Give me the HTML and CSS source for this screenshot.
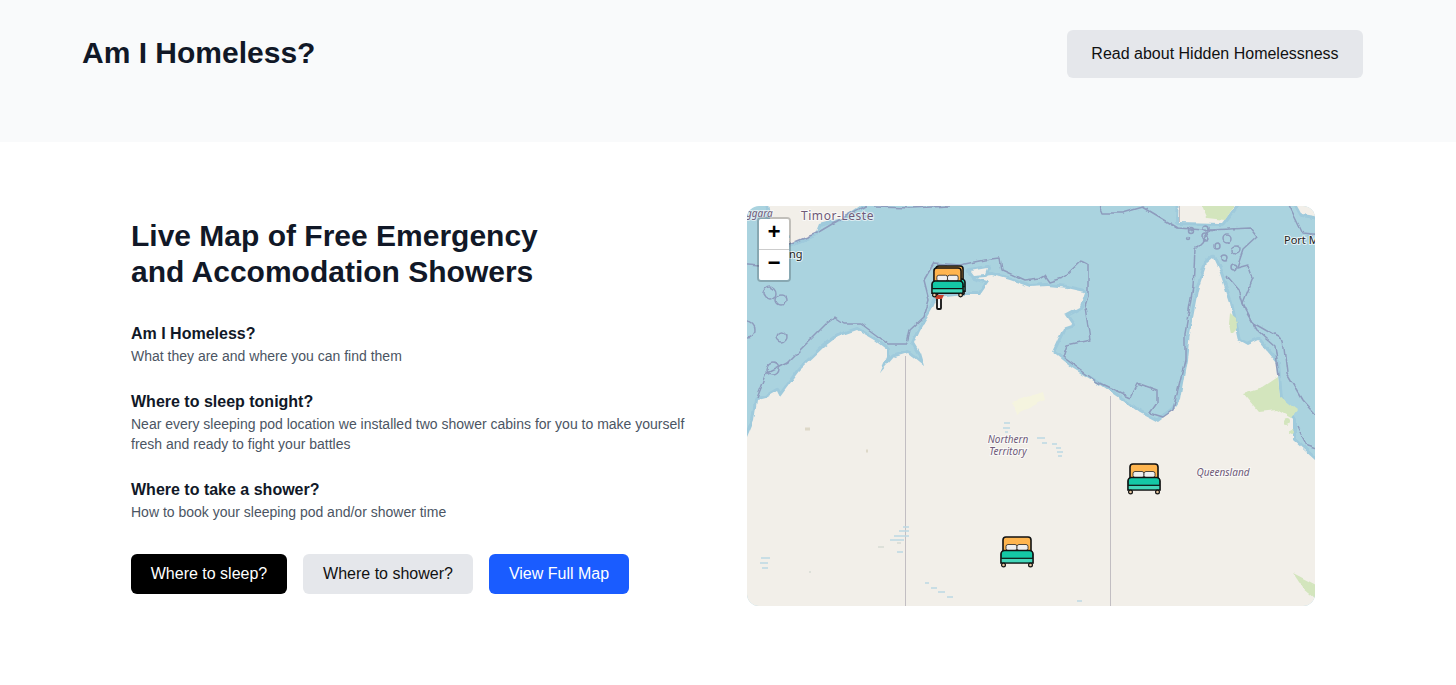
FILE: index.html
```html
<!DOCTYPE html>
<html lang="en">
  <head>
    <meta charset="utf-8" />
    <title>Am I Homeless?</title>
    <link rel="stylesheet" href="styles.css">
  </head>
  <body>
    <header class="topo">
      <h1>Am I Homeless?</h1>
      <a class="btn btn-cinza btn-topo" href="#">Read about Hidden Homelessness</a>
    </header>

    <main class="conteudo">
      <section class="esquerda">
        <h2>Live Map of Free Emergency<br>and Accomodation Showers</h2>
        <div class="item">
          <h3>Am I Homeless?</h3>
          <p>What they are and where you can find them</p>
        </div>
        <div class="item">
          <h3>Where to sleep tonight?</h3>
          <p>Near every sleeping pod location we installed two shower cabins for you to make yourself fresh and ready to fight your battles</p>
        </div>
        <div class="item">
          <h3>Where to take a shower?</h3>
          <p>How to book your sleeping pod and/or shower time</p>
        </div>
        <div class="botoes">
          <a class="btn btn-preto" href="#">Where to sleep?</a>
          <a class="btn btn-cinza btn-banho" href="#">Where to shower?</a>
          <a class="btn btn-azul" href="#">View Full Map</a>
        </div>
      </section>

      <div class="mapa">
        <svg class="mapa-svg" viewBox="0 0 568 400" width="568" height="400">
          <defs>
            <filter id="costa" filterUnits="userSpaceOnUse" x="-30" y="-30" width="630" height="460">
              <feTurbulence type="fractalNoise" baseFrequency="0.09" numOctaves="2" seed="4"/>
              <feDisplacementMap in="SourceGraphic" scale="5" xChannelSelector="R" yChannelSelector="G"/>
              <feGaussianBlur stdDeviation="0.45"/>
            </filter>
            <filter id="suave" filterUnits="userSpaceOnUse" x="0" y="0" width="568" height="400">
              <feGaussianBlur stdDeviation="0.5"/>
            </filter>
            <symbol id="cama" viewBox="0 0 34 32">
              <path d="M3 15V4a3 3 0 0 1 3-3h22a3 3 0 0 1 3 3v11z" fill="#ffb54f" stroke="#111" stroke-width="1.6"/>
              <rect x="6" y="8.5" width="11" height="6" rx="2" fill="#efefef" stroke="#222" stroke-width=".8"/>
              <rect x="17" y="8.5" width="11" height="6" rx="2" fill="#efefef" stroke="#222" stroke-width=".8"/>
              <path d="M1 27V18a3.5 3.5 0 0 1 3.5-3.5h25A3.5 3.5 0 0 1 33 18v9z" fill="#14c8a6" stroke="#111" stroke-width="1.7"/>
              <rect x="1.8" y="23" width="30.4" height="3.2" fill="#45d6ba"/>
              <path d="M1.5 22.3h31" stroke="#111" stroke-width="1.2"/>
              <circle cx="3.5" cy="29" r="1.9" fill="#e8c8a0" stroke="#111" stroke-width="1.2"/>
              <circle cx="30.5" cy="29" r="1.9" fill="#e8c8a0" stroke="#111" stroke-width="1.2"/>
            </symbol>
          </defs>

          <rect width="568" height="400" fill="#aad3df"/>

          <!-- faixa rasa + terra -->
          <g filter="url(#costa)">
            <path class="terra" d="M-20,240 L0,231 L7,214 L10,194 L18,192 L30,185 L33,191 L53,164 L77,141 L90,131 L110,124 L127,134 L140,144 L140,151 L133,167 L147,151 L160,147 L177,161 L173,147 L167,137 L173,124 L185,104 L190,92 L217,89 L233,89 L242,76 L227,71 L245,69 L263,74 L283,81 L300,80 L320,82 L338,86 L333,101 L318,109 L325,119 L316,122 L305,146 L325,162 L350,177 L375,194 L393,207 L410,216 L426,204 L433,194 L440,154 L443,127 L451,84 L460,57 L466,52 L473,67 L483,97 L491,134 L500,139 L511,134 L530,157 L533,194 L546,214 L546,234 L568,254 L590,262 L590,420 L-20,420 Z"/>
            <path class="terra" d="M223,65 L240,62 L238,68 L226,69 Z"/>
            <path class="terra" d="M43,38 L68,28 L72,18 L95,12 L128,-10 L20,-10 L24,18 L40,24 Z"/>
            <path class="terra" d="M432,-10 L431,16 L475,17 L496,-10 Z"/>
            <path class="terra" d="M545,-10 L590,-10 L590,14 L555,8 Z"/>

            <!-- verdes -->
            <g fill="#d3e5bd">
              <path d="M453,-4 L460,12 L478,14 L490,-4 Z"/>
              <path d="M483,107 L489,112 L490,122 L484,128 L482,118 Z"/>
              <path d="M496,187 L516,181 L531,171 L533,191 L550,204 L544,212 L530,204 L512,206 Z"/>
              <path d="M546,367 L575,382 L575,398 L556,382 Z"/>
              <circle cx="540" cy="216" r="3"/>
              <circle cx="545" cy="226" r="2"/>
            </g>
            <path d="M265,196 L296,186 L298,194 L270,208 Z" fill="#f5f4df"/>

            <!-- fronteiras maritimas -->
            <g class="linha">
              <polyline points="10,192 20,167 40,157 60,137 80,117 88,111 97,117 113,117 140,137 160,137 163,124 177,111 182,94 177,74 187,57 213,59 237,54 253,52 255,64 277,74 293,72 298,69 303,76 316,72 335,54 341,57 341,91 338,101 343,134 320,139 316,151 350,176 383,191 390,177 410,184 410,197 403,207 416,211 426,204 438,154 438,127 446,81 448,44 456,36 463,24 503,22 510,31 496,44 490,62 501,59 506,72 496,97 506,117 536,134 540,167 556,194 575,215"/>
              <polyline points="-10,57 13,59 43,38 70,27 97,11 128,-5"/>
              <polyline points="127,1 165,2 203,0"/>
              <polyline points="351,-5 356,7 375,7 396,1 431,22 470,25"/>
              <polyline points="540,-5 556,28 575,30"/>
              <circle cx="23" cy="87" r="7"/>
              <circle cx="34" cy="94" r="5"/>
              <circle cx="34" cy="131" r="5"/>
              <circle cx="0" cy="124" r="8"/>
              <circle cx="26" cy="163" r="6"/>
              <circle cx="444" cy="24" r="2.5"/>
              <circle cx="459" cy="22" r="3"/>
              <circle cx="459" cy="31" r="3"/>
              <circle cx="441" cy="32" r="1.5"/>
              <circle cx="480" cy="32" r="4"/>
              <circle cx="470" cy="40" r="3"/>
              <circle cx="489" cy="44" r="4"/>
              <circle cx="478" cy="52" r="3"/>
              <circle cx="486" cy="62" r="3"/>
              <polyline points="480,70 492,84 498,104 510,124 528,140 532,170"/>
              <polyline points="550,220 560,240 575,245"/>
            </g>
          </g>

          <!-- divisas -->
          <path d="M158.5,150V400M363.5,190V400M432.5,0V16" stroke="#c2bec2" stroke-width="1" fill="none"/>

          <!-- lagos -->
          <g stroke="#bcd9e3" stroke-width="1.5" fill="none" filter="url(#suave)">
            <path d="M143,334h14M147,330h15M152,325h10M156,321h6M14,352h9M13,357h8M15,362h6M150,346h6M178,377h4M184,382h6M191,386h7M200,391h6"/>
            <path d="M257,217h6M256,222h7M258,226h3M290,232h8M295,237h5M305,238h5M309,242h5M310,246h6M311,250h4"/>
            <path d="M330,395h5"/>
          </g>
          <path d="M131,341h6M150,337h4M62,366h2" stroke="#d6dcd4" stroke-width="1.4" fill="none"/>
          <path d="M58,223h5M119,245h2" stroke="#ddd8c8" stroke-width="3" fill="none"/>

          <!-- nomes -->
          <text class="pais" x="54" y="14">Timor-Leste</text>
          <text class="ital" x="-1" y="11">ggara</text>
          <text class="cidade" x="42" y="52">ng</text>
          <text class="cidade" x="537" y="38">Port M</text>
          <text class="ital" x="261" y="237" text-anchor="middle">Northern</text>
          <text class="ital" x="261" y="249" text-anchor="middle">Territory</text>
          <text class="ital" x="476" y="270" text-anchor="middle">Queensland</text>

          <!-- marcadores -->
          <rect x="190" y="90" width="4" height="13" rx="1" fill="#f4f4f4" stroke="#111" stroke-width="1.8"/>
          <path d="M187,89h10l-2,4h-6z" fill="#c8402a"/>
          <use href="#cama" x="186" y="59" width="33" height="31"/>
          <use href="#cama" x="184" y="61" width="33" height="31"/>
          <use href="#cama" x="380" y="257" width="34" height="32"/>
          <use href="#cama" x="253" y="330" width="34" height="32"/>
        </svg>

        <div class="zoom">
          <a href="#">+</a>
          <a href="#">−</a>
        </div>
      </div>
    </main>
  </body>
</html>
```

FILE: styles.css
```css
body{
  margin: 0;
  font-family: "Liberation Sans", Arial, sans-serif;
  color: #111827;
  background-color: #fff;
}
a{
  text-decoration: none;
}

.topo{
  display: flex;
  justify-content: space-between;
  align-items: flex-start;
  height: 142px;
  box-sizing: border-box;
  padding: 30px 93px 0 82px;
  background-color: #f9fafb;
}
.topo h1{
  margin: 0;
  font-size: 30px;
  line-height: 46px;
  font-weight: bold;
}

.btn{
  display: inline-flex;
  align-items: center;
  justify-content: center;
  height: 40px;
  border-radius: 6px;
  font-size: 16px;
}
.btn-topo{
  width: 296px;
  height: 48px;
}
.btn-cinza{
  background-color: #e5e7eb;
  color: #111;
}
.btn-banho{
  width: 170px;
}
.btn-preto{
  width: 156px;
  background-color: #000;
  color: #fff;
}
.btn-azul{
  width: 140px;
  background-color: #1a5cff;
  color: #fff;
}

.conteudo{
  display: flex;
  align-items: flex-start;
  padding: 64px 141px 79px 131px;
}
.esquerda{
  width: 570px;
  margin: 12px 46px 0 0;
}
.esquerda h2{
  margin: 0 0 32px;
  font-size: 30px;
  line-height: 36px;
  font-weight: bold;
}
.item{
  margin-bottom: 24px;
}
.item h3{
  margin: 0;
  font-size: 16px;
  line-height: 24px;
  font-weight: bold;
}
.item p{
  margin: 0;
  font-size: 14px;
  line-height: 20px;
  color: #4b5563;
}
.botoes{
  display: flex;
  gap: 16px;
  margin-top: 32px;
}

.mapa{
  position: relative;
  flex: none;
  width: 568px;
  height: 400px;
  border-radius: 12px;
  overflow: hidden;
}
.mapa-svg{
  display: block;
}
.terra{
  fill: #f2efe9;
  stroke: #9fcadc;
  stroke-width: 6;
  paint-order: stroke;
  stroke-linejoin: round;
}
.linha polyline, .linha circle{
  fill: none;
  stroke: #8e9cbd;
  stroke-width: 1.5;
  stroke-linejoin: round;
}
.pais{
  font-family: "Noto Sans", "Open Sans", sans-serif;
  font-size: 12px;
  letter-spacing: .55px;
  fill: #6f5a78;
  stroke: #fff;
  stroke-width: 2;
  stroke-opacity: .6;
  paint-order: stroke;
}
.cidade{
  font-family: "Noto Sans", "Open Sans", sans-serif;
  font-size: 11px;
  fill: #222;
  stroke: #fff;
  stroke-width: 2;
  stroke-opacity: .7;
  paint-order: stroke;
}
.ital{
  font-family: "Noto Sans", "Open Sans", sans-serif;
  font-style: italic;
  font-size: 10px;
  fill: #6f5a78;
  stroke: #fff;
  stroke-width: 2;
  stroke-opacity: .6;
  paint-order: stroke;
}

.zoom{
  position: absolute;
  left: 10px;
  top: 11px;
  width: 30px;
  border: 2px solid rgba(0,0,0,.2);
  border-radius: 4px;
  background-clip: padding-box;
}
.zoom a{
  display: block;
  height: 30px;
  background-color: #fff;
  color: #000;
  font-family: "Liberation Mono", monospace;
  font-size: 22px;
  font-weight: bold;
  line-height: 30px;
  text-align: center;
}
.zoom a:first-child{
  border-bottom: 1px solid #ccc;
  border-radius: 2px 2px 0 0;
}
.zoom a:last-child{
  border-radius: 0 0 2px 2px;
}
```
